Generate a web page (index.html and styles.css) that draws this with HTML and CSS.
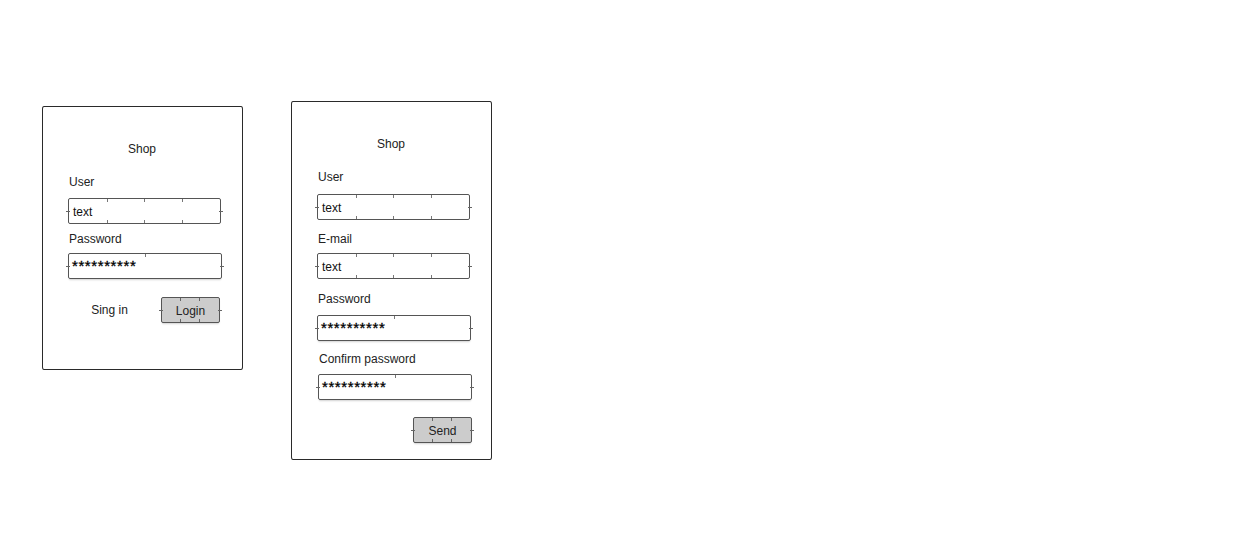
FILE: index.html
```html
<!DOCTYPE html>
<html>
<head>
<meta charset="utf-8">
<link rel="stylesheet" href="styles.css">
</head>
<body>
<div class="canvas">
  <div class="card card-login">
    <div class="title">Shop</div>
    <div class="label l-user1">User</div>
    <div class="input text-input i-user1">text</div>
    <div class="label l-pass1">Password</div>
    <div class="input pass-input i-pass1">**********</div>
    <div class="actions">
      <span class="link">Sing in</span>
      <span class="btn">Login</span>
    </div>
  </div>
  <div class="card card-register">
    <div class="title">Shop</div>
    <div class="label l-user2">User</div>
    <div class="input text-input i-user2">text</div>
    <div class="label l-mail">E-mail</div>
    <div class="input text-input i-mail">text</div>
    <div class="label l-pass2">Password</div>
    <div class="input pass-input i-pass2">**********</div>
    <div class="label l-conf">Confirm password</div>
    <div class="input pass-input i-conf">**********</div>
    <div class="actions actions-end">
      <span class="btn">Send</span>
    </div>
  </div>
</div>
</body>
</html>
```

FILE: styles.css
```css
* { box-sizing: border-box; }
html, body { margin: 0; padding: 0; background: #fff; }
body {
  font-family: "Liberation Sans", Arial, sans-serif;
  font-size: 12px;
  color: #222;
  width: 1236px;
  height: 545px;
  overflow: hidden;
}
.canvas {
  display: flex;
  align-items: flex-start;
  gap: 48px;
  padding: 101px 0 0 42px;
}
.card {
  width: 201px;
  border: 1px solid #2a2a2a;
  border-radius: 2px / 3px;
  display: flex;
  flex-direction: column;
  padding-left: 25px;
  background: #fff;
}
.card-login { margin-top: 5px; height: 264px; }
.card-register { height: 359px; }

.title {
  line-height: 18px;
  height: 16px;
  margin-top: 33px;
  width: 148px;
  text-align: center;
}

.label { line-height: 18px; height: 16px; padding-left: 1px; }

.input {
  position: relative;
  height: 26px;
  line-height: 25px;
  border: 1.5px solid #555;
  border-radius: 2px;
  padding-left: 4px;
  width: 153px;
  color: #111;
  background-repeat: no-repeat;
}
.input::before,
.input::after {
  content: "";
  position: absolute;
  top: 50%;
  width: 4px;
  height: 1px;
  background: #666;
}
.input::before { left: -3px; }
.input::after { right: -3px; }

.text-input {
  padding-top: 1px;
  background-image:
    linear-gradient(#777, #777), linear-gradient(#777, #777), linear-gradient(#777, #777),
    linear-gradient(#777, #777), linear-gradient(#777, #777), linear-gradient(#777, #777);
  background-size: 1px 3px;
  background-position: 25% 0, 50% 0, 75% 0, 25% 100%, 50% 100%, 75% 100%;
}
.pass-input {
  width: 154px;
  font-size: 15px;
  font-weight: normal;
  letter-spacing: 0.6px;
  line-height: 24px;
  padding-left: 3px;
  color: #000;
  -webkit-text-stroke: 0.3px #000;
  box-shadow: 0 2px 2px -1px rgba(0, 0, 0, 0.18);
  background-image: linear-gradient(#777, #777);
  background-size: 1px 3px;
  background-position: 50% 0;
}

/* login card spacing */
.l-user1 { margin-top: 17px; }
.i-user1 { margin-top: 9px; }
.l-pass1 { margin-top: 6px; }
.i-pass1 { margin-top: 7px; }

/* register card spacing */
.l-user2 { margin-top: 17px; }
.i-user2 { margin-top: 10px; }
.l-mail { margin-top: 10px; }
.i-mail { margin-top: 7px; }
.l-pass2 { margin-top: 11px; }
.i-pass2 { margin-top: 9px; }
.l-conf { margin-top: 9px; padding-left: 2px; }
.i-conf { margin-top: 8px; margin-left: 1px; }

.actions {
  display: flex;
  align-items: center;
  width: 152px;
  margin-top: 18px;
}
.actions-end { justify-content: flex-end; width: 155px; margin-top: 17px; }
.link {
  width: 83px;
  text-align: center;
  line-height: 18px;
}
.card-login .actions .btn { margin-left: 10px; }
.btn {
  position: relative;
  width: 59px;
  height: 26px;
  line-height: 25px;
  padding-top: 1px;
  text-align: center;
  background-color: #cccccc;
  border: 1.5px solid #555;
  border-radius: 2px;
  box-shadow: 0 2px 2px -1px rgba(0, 0, 0, 0.18);
  color: #222;
  background-image:
    linear-gradient(#666, #666), linear-gradient(#666, #666),
    linear-gradient(#666, #666), linear-gradient(#666, #666);
  background-repeat: no-repeat;
  background-size: 1px 3px;
  background-position: 33% 0, 66% 0, 33% 100%, 66% 100%;
}
.btn::before,
.btn::after {
  content: "";
  position: absolute;
  top: 50%;
  width: 4px;
  height: 1px;
  background: #666;
}
.btn::before { left: -3px; }
.btn::after { right: -3px; }
```
